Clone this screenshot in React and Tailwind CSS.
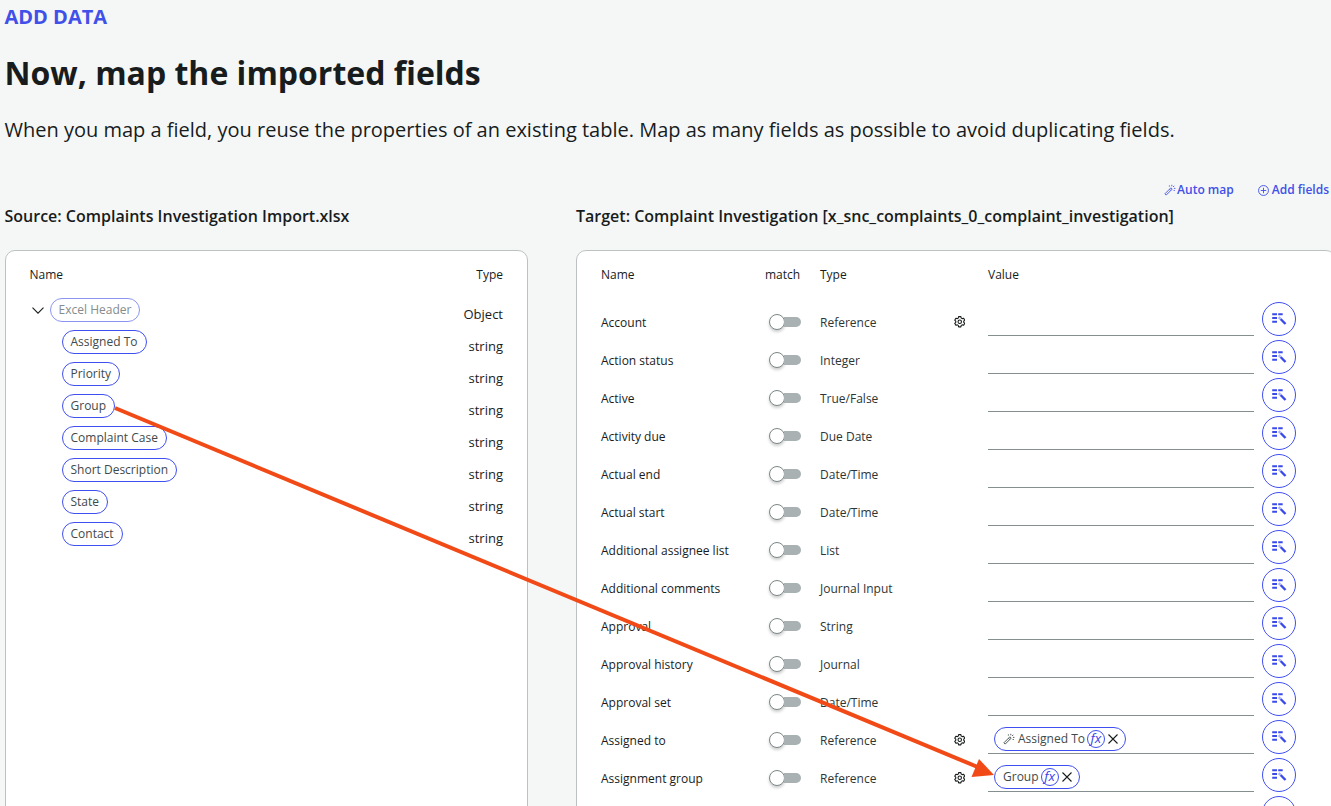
import React from "react";

const sources = [
  ["Assigned To", "w-[85px]"],
  ["Priority", "w-[58px]"],
  ["Group", "w-[53px]"],
  ["Complaint Case", "w-[105px]"],
  ["Short Description", "w-[115px]"],
  ["State", "w-[46px]"],
  ["Contact", "w-[61px]"],
];

const targets = [
  { name: "Account", type: "Reference", gear: true },
  { name: "Action status", type: "Integer" },
  { name: "Active", type: "True/False" },
  { name: "Activity due", type: "Due Date" },
  { name: "Actual end", type: "Date/Time" },
  { name: "Actual start", type: "Date/Time" },
  { name: "Additional assignee list", type: "List" },
  { name: "Additional comments", type: "Journal Input" },
  { name: "Approval", type: "String" },
  { name: "Approval history", type: "Journal" },
  { name: "Approval set", type: "Date/Time" },
  { name: "Assigned to", type: "Reference", gear: true, value: "Assigned To", auto: true },
  { name: "Assignment group", type: "Reference", gear: true, value: "Group" },
  { name: "", type: "" },
];

function Wand({ className }) {
  return (
    <svg viewBox="0 0 12 12" className={className} fill="none" stroke="currentColor" strokeWidth="0.9">
      <path d="M0.9 9.8 6.9 3.8 8.2 5.1 2.2 11.1Z M5.5 5.2 6.8 6.5" strokeLinejoin="round" />
      <path d="M5.4 1.4v1.2M7.8 0.8v1.5M9.1 3l1.2-1.2M9.9 4.4h1.5M9.6 6.5h1.2" />
    </svg>
  );
}

function Gear() {
  return (
    <svg viewBox="0 0 12 12" className="size-[11.5px]" fill="none" stroke="#181c1c" strokeWidth="1.15" strokeLinejoin="round">
      <path d="M4.8 0.7h2.4l.35 1.5 1 .55 1.5-.45 1.2 2.1-1.1 1.05v1.1l1.1 1.05-1.2 2.1-1.5-.45-1 .55-.35 1.5H4.8l-.35-1.5-1-.55-1.5.45-1.2-2.1 1.1-1.05v-1.1L.75 4.4l1.2-2.1 1.5.45 1-.55z" />
      <circle cx="6" cy="6" r="1.8" />
    </svg>
  );
}

function MapButton() {
  return (
    <div className="flex size-[34px] shrink-0 items-center justify-center rounded-full border border-[#3f4ff0] bg-white">
      <svg viewBox="0 0 16 14" className="h-[14px] w-4" fill="none" stroke="#3b4bea" strokeWidth="2" strokeLinecap="butt">
        <path d="M1.2 2.2h4.8M7.2 2.2h4.5M1.2 6h4.8M1.2 9.8h4.8" />
        <path d="M9.6 7 14.5 12" strokeWidth="2.5" />
        <path d="M7.7 5.1 9.5 6.9" strokeWidth="2.5" stroke="#a9b1f4" />
      </svg>
    </div>
  );
}

function ValuePill({ label, auto }) {
  return (
    <div
      className={
        "flex h-6 items-center rounded-full border border-[#3f4ff0] bg-white pl-2 text-[12px] text-[#3f4a4a] " +
        (auto ? "w-[132px]" : "w-[86px]")
      }
    >
      {auto && <Wand className="mr-[3px] size-3 shrink-0" />}
      <span className="whitespace-nowrap">{label}</span>
      <span className="ml-[2px] flex size-[18px] shrink-0 items-center justify-center rounded-full border border-[#3f4ff0] pb-px text-[13.5px] italic leading-none text-[#3444e8]">
        fx
      </span>
      <svg viewBox="0 0 10 10" className="ml-[3px] size-[10px] shrink-0" stroke="#181c1c" strokeWidth="1.1">
        <path d="M.5.5l9 9M9.5.5l-9 9" />
      </svg>
    </div>
  );
}

export default function App() {
  return (
    <div
      className="relative h-[806px] w-[1331px] overflow-hidden bg-[#f5f7f7] text-[#181c1c]"
      style={{ fontFamily: '"Open Sans", "Noto Sans", sans-serif' }}
    >
      <div className="flex h-[182px] flex-col pl-[4.5px]">
        <div className="mt-1 h-[26px] text-[20px] font-bold leading-[26px] text-[#4150e8]">ADD DATA</div>
        <h1 className="mt-[21px] h-11 whitespace-nowrap text-[32px] font-bold leading-[44px]">
          Now, map the imported fields
        </h1>
        <p className="mt-[21px] whitespace-nowrap text-[20px] leading-7">
          When you map a field, you reuse the properties of an existing table. Map as many fields as possible to avoid
          duplicating fields.
        </p>
      </div>

      <div className="flex h-4 items-center justify-end pr-[2px] text-[12px] font-semibold text-[#4150e8]">
        <Wand className="mr-[1px] size-3" />
        <span className="mr-6">Auto map</span>
        <svg viewBox="0 0 12 12" className="mr-[3px] size-[11px]" fill="none" stroke="currentColor">
          <circle cx="6" cy="6" r="5.4" />
          <path d="M6 3v6M3 6h6" />
        </svg>
        <span>Add fields</span>
      </div>

      <div className="flex h-[52px] pt-2 text-[16px] font-semibold leading-5">
        <h2 className="w-[571px] whitespace-nowrap pl-[4.5px]">Source: Complaints Investigation Import.xlsx</h2>
        <h2 className="whitespace-nowrap pl-[5px]">
          Target: Complaint Investigation [x_snc_complaints_0_complaint_investigation]
        </h2>
      </div>

      <div className="flex pl-[5px] text-[12px] leading-4">
        <section className="h-[600px] w-[523px] shrink-0 rounded-[10px] border border-[#bcc2c2] bg-white pl-[23.5px] pr-6 pt-4">
          <div className="flex justify-between">
            <span>Name</span>
            <span>Type</span>
          </div>
          <div className="mt-[15px] flex h-8 items-start justify-between">
            <div className="flex items-center">
              <svg viewBox="0 0 12 7" className="ml-[2.5px] mr-[6px] h-[7px] w-3" fill="none" stroke="#181c1c" strokeWidth="1.1">
                <path d="M.5.6 6 6.1 11.5.6" />
              </svg>
              <span className="flex h-6 w-[90px] items-center justify-center whitespace-nowrap rounded-full border border-[#8b95f1] text-[#858c8c]">
                Excel Header
              </span>
            </div>
            <span className="mt-2 text-[13px]">Object</span>
          </div>
          {sources.map(([label, width]) => (
            <div key={label} className="flex h-8 items-start justify-between pl-[32.5px]">
              <span
                className={
                  "flex h-6 items-center whitespace-nowrap rounded-full border border-[#3f4ff0] pl-[7.5px] text-[#3f4a4a] " +
                  width
                }
              >
                {label}
              </span>
              <span className="mt-2 text-[13px]">string</span>
            </div>
          ))}
        </section>

        <section className="ml-12 h-[600px] w-[760px] shrink-0 rounded-[10px] border border-[#bcc2c2] bg-white pl-6 pt-4">
          <div className="flex">
            <span className="w-[164px]">Name</span>
            <span className="w-[55px]">match</span>
            <span className="w-[168px]">Type</span>
            <span>Value</span>
          </div>
          <div className="mt-[19px]">
            {targets.map((t, i) => (
              <div key={i} className="flex h-[38px] items-start">
                <span className="mt-[13px] w-[167.5px] shrink-0 whitespace-nowrap">{t.name}</span>
                <span className="flex w-[51.5px] shrink-0 items-center pt-[12px]">
                  <span className="z-0 size-4 rounded-full border border-[#7c8787] bg-white shadow-[0_2px_3px_rgba(0,0,0,0.2)]" />
                  <span className="-ml-[7.5px] h-[10px] w-6 rounded-r-full bg-[#a9b1b3] [clip-path:inset(0_0_0_7px)]" />
                </span>
                <span className="mt-[13px] w-[133.5px] shrink-0 text-[#2e3535]">{t.type}</span>
                <span className="mt-[14px] w-[34.5px] shrink-0">{t.gear && <Gear />}</span>
                <span className="mr-2 flex h-[34px] w-[266px] shrink-0 items-start border-b border-[#858f8f] pl-[6px] pt-[7px]">
                  {t.value && <ValuePill label={t.value} auto={t.auto} />}
                </span>
                <MapButton />
              </div>
            ))}
          </div>
        </section>
      </div>

      <svg className="pointer-events-none absolute inset-0 h-[806px] w-[1331px]" viewBox="0 0 1331 806">
        <path d="M115 408 980 768" stroke="#f24a17" strokeWidth="4" />
        <path d="M994 775 971.5 777 979 759Z" fill="#f24a17" />
      </svg>
    </div>
  );
}
